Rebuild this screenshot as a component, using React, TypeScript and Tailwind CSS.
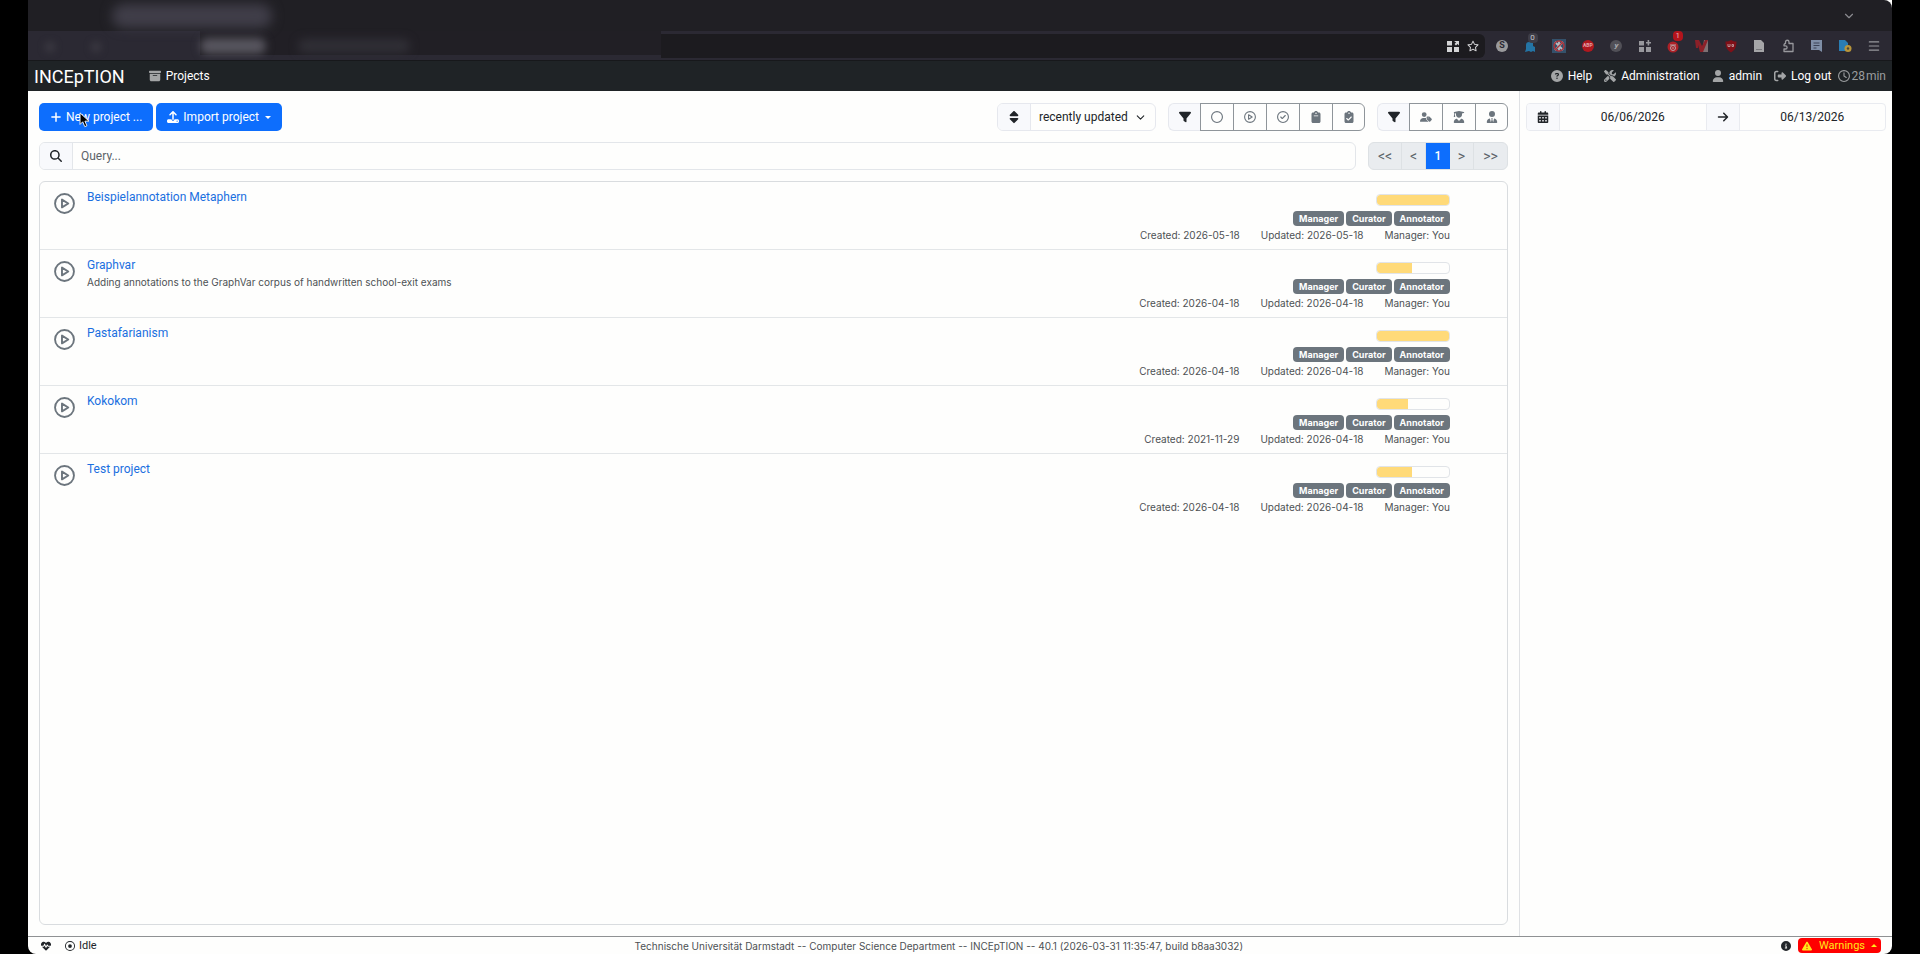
import React from "react";
import {
  FaArrowRight, FaBoxArchive, FaCalendarDays, FaCircleInfo, FaCircleQuestion, FaClipboard, FaClipboardCheck, FaFilter,
  FaHeartPulse, FaMagnifyingGlass, FaPlus, FaRegCircle, FaRegCircleCheck, FaRegCircleDot, FaRegClock,
  FaRegStar, FaRightFromBracket, FaScrewdriverWrench, FaSort, FaTriangleExclamation, FaUpload, FaUser, FaUserGraduate,
  FaUserTag, FaUserTie,
} from "react-icons/fa6";
import { ChevronDown, Menu } from "lucide-react";

type Project = { name: string; description?: string; created: string; updated: string; progress: number };

const projects: Project[] = [
  { name: "Beispielannotation Metaphern", created: "2026-05-18", updated: "2026-05-18", progress: 100 },
  { name: "Graphvar", description: "Adding annotations to the GraphVar corpus of handwritten school-exit exams", created: "2026-04-18", updated: "2026-04-18", progress: 48 },
  { name: "Pastafarianism", created: "2026-04-18", updated: "2026-04-18", progress: 100 },
  { name: "Kokokom", created: "2021-11-29", updated: "2026-04-18", progress: 43 },
  { name: "Test project", created: "2026-04-18", updated: "2026-04-18", progress: 48 },
];

const roles = ["Manager", "Curator", "Annotator"];

function PlayIcon({ className }: { className: string }) {
  return (
    <svg viewBox="0 0 20 20" className={className} fill="none" stroke="currentColor" strokeWidth="1.800" strokeLinejoin="round">
      <circle cx="10" cy="10" r="9" />
      <path d="M7.600 6.300v7.400l6-3.700z" />
    </svg>
  );
}

const stateFilters = [
  { label: "New", icon: <FaRegCircle /> },
  { label: "In progress", icon: <PlayIcon className="size-3" /> },
  { label: "Finished", icon: <FaRegCircleCheck /> },
  { label: "Curation", icon: <FaClipboard /> },
  { label: "Curation finished", icon: <FaClipboardCheck /> },
];

const roleFilters = [
  { label: "Annotator", icon: <FaUserTag /> },
  { label: "Curator", icon: <FaUserGraduate /> },
  { label: "Manager", icon: <FaUserTie /> },
];

function TilesIcon({ plus }: { plus?: boolean }) {
  return (
    <svg viewBox="0 0 12 12" className="size-3 fill-current">
      <path d="M0 1h5v4.500H0zM0 7h5v5H0zM7 7h5v5H7z" />
      <path d={plus ? "M8.600 0h1.600v2h2v1.600h-2v2H8.600v-2H7V2h1.600z" : "M7 1h5v4.500l-1.400-1.400L9 5.500 7.500 4l1.600-1.600z"} />
    </svg>
  );
}

function BlueAddonIcon() {
  return (
    <span className="relative block">
      <svg viewBox="0 0 14 14" className="size-3.5">
        <path fill="#2474a5" d="M2 6c0-2 1-3 3-3h4v4l2 1v5l-2-1-2 1-2-1-4 1 1-3z" />
      </svg>
      <span className="absolute -top-1.5 left-1 w-2.5 rounded-sm bg-[#3e3d47] text-center text-[8px] leading-[10px] text-[#c5c5ca]">0</span>
    </span>
  );
}

function BlockedIcon() {
  return (
    <svg viewBox="0 0 14 14" className="size-3.5">
      <path fill="#34516b" d="M0 0h14v14H0z" />
      <path stroke="#b9bcc2" strokeWidth="1.800" d="m3 3 8 8M11 3 3 11M7 2v10" />
      <circle cx="7" cy="7" r="5" fill="none" stroke="#a8363e" strokeWidth="1.500" />
      <path stroke="#a8363e" strokeWidth="1.500" d="m3.500 10.500 7-7" />
    </svg>
  );
}

function RoundBadge({ children, tone }: { children: string; tone: "gray" | "dim" | "red" }) {
  const tones = {
    gray: "bg-[#9a9a9c] text-[#2b2933] text-[9px]",
    dim: "bg-[#515057] text-[#a9a9ad] text-[8px] italic",
    red: "bg-[#b0181f] text-[#e0a5a8] text-[5px]",
  };
  return <span className={`flex size-3 items-center justify-center rounded-full font-bold ${tones[tone]}`}>{children}</span>;
}

function AlarmIcon() {
  return (
    <span className="relative block">
      <svg viewBox="0 0 14 14" className="size-3.5">
        <circle cx="6" cy="8" r="5.500" fill="#ad2027" />
        <circle cx="6" cy="9" r="2.500" fill="none" stroke="#b9a3a5" />
        <path stroke="#b9a3a5" d="M3 6h6M6 8v2" />
      </svg>
      <span className="absolute -top-2 left-1.5 w-2.5 rounded-sm bg-[#b3141c] text-center text-[8px] leading-[10px] text-[#e6b4b6]">1</span>
    </span>
  );
}

function BooksIcon() {
  return (
    <svg viewBox="0 0 14 14" className="size-3.5">
      <path fill="#7e7174" d="M9 1h4v12H7z" />
      <path fill="#8c2028" d="M0 1h4l3 6 3-6h3L8 13H5L3 6v3H1z" />
    </svg>
  );
}

function ShieldIcon() {
  return (
    <svg viewBox="0 0 14 14" className="size-3.5">
      <path fill="#7f1018" d="M7 1c2 1.400 3.500 1.600 5.500 1.600C12.500 8 11 11.500 7 13.500 3 11.500 1.500 8 1.500 2.600 3.500 2.600 5 2.400 7 1z" />
      <path fill="none" stroke="#b98f92" d="M4 5v2.500h2V5M8 5.500h1.500v2H8z" />
    </svg>
  );
}

function PageIcon() {
  return (
    <svg viewBox="0 0 12 14" className="h-3.5 w-3">
      <path fill="#a5a5a8" d="M1 1h7l3 3v9H1z" />
      <path stroke="#77777c" d="M3 10.500h6" />
    </svg>
  );
}

function ExtensionsIcon() {
  return (
    <svg viewBox="0 0 14 14" className="size-3.5">
      <path
        d="M4.500 4.500V3a1.700 1.700 0 0 1 3.500 0v1.500h4v8H3V10h1.500a1.600 1.600 0 0 0 0-3.200H3v-.8c0-.9.600-1.500 1.500-1.500z"
        fill="none"
        stroke="currentColor"
        strokeWidth="1.300"
        strokeLinejoin="round"
      />
    </svg>
  );
}

function NoteIcon() {
  return (
    <svg viewBox="0 0 14 14" className="size-3.5">
      <path fill="#7f8ea6" d="M1 1h11v12l-3-2H1z" />
      <path stroke="#3c4356" d="M3.500 4h6M3.500 6.500h6M3.500 9h3" />
    </svg>
  );
}

function DocumentLockIcon() {
  return (
    <svg viewBox="0 0 14 14" className="size-3.5">
      <path fill="#2a7db3" d="M1 1h6l3 3v8H1z" />
      <circle cx="10" cy="9.500" r="3.500" fill="#b8953a" />
      <circle cx="10" cy="9.500" r="1.200" fill="#4a4538" />
    </svg>
  );
}

const extensions = [
  <RoundBadge tone="gray">S</RoundBadge>,
  <BlueAddonIcon />,
  <BlockedIcon />,
  <RoundBadge tone="red">ABP</RoundBadge>,
  <RoundBadge tone="dim">y</RoundBadge>,
  <TilesIcon plus />,
  <AlarmIcon />,
  <BooksIcon />,
  <ShieldIcon />,
  <PageIcon />,
  <ExtensionsIcon />,
  <NoteIcon />,
  <DocumentLockIcon />,
  <Menu size={14} strokeWidth={2} />,
];

function BrowserChrome() {
  return (
    <header className="relative h-[60px] shrink-0 overflow-hidden rounded-tr-lg bg-[#201f24]">
      <div className="flex h-[31px] items-center justify-end pr-9 text-[#8b8b90]">
        <ChevronDown size={14} strokeWidth={2} />
      </div>
      <div className="flex h-[29px] bg-[#2b2933]">
        <div className="h-6 w-[172px]" />
        <div className="h-6 w-[461px] bg-[#211f25]" />
        <div className="flex flex-1 items-center pr-[11px]">
          <div className="mr-2.5 flex h-6 flex-1 items-center justify-end gap-2 rounded-r-md bg-[#1c1b1f] pr-1.5 text-[#d4d4d6]">
            <TilesIcon />
            <FaRegStar className="size-3" />
          </div>
          <div className="flex w-[386px] items-center justify-between text-[#98989d]">
            {extensions.map((icon, i) => (
              <span key={i} className="flex w-3.5 items-center justify-center">{icon}</span>
            ))}
          </div>
        </div>
      </div>
      <div className="absolute top-1 left-[84px] h-6 w-40 rounded-full bg-[#403e49] blur-[6px]" />
      <div className="absolute top-[38px] left-[172px] h-4 w-[66px] rounded-lg bg-[#57555e] blur-[4px]" />
      <div className="absolute top-[39px] left-[270px] h-3.5 w-28 rounded-full bg-[#302f36] blur-[5px]" />
      <div className="absolute top-[41px] left-[62px] size-3 rounded-full bg-[#37353e] blur-[3px]" />
      <div className="absolute top-[41px] left-4 size-3 rounded-full bg-[#37353e] blur-[3px]" />
    </header>
  );
}

function NavItem({ icon, children }: { icon: React.ReactNode; children: React.ReactNode }) {
  return (
    <a href="#" className="flex items-center gap-[5px] text-white">
      <span className="text-[#a3a5a6]">{icon}</span>
      {children}
    </a>
  );
}

function Addon({ children }: { children: React.ReactNode }) {
  return <span className="flex w-8 shrink-0 items-center justify-center bg-[#f8f9fc] text-[#212529]">{children}</span>;
}

function FilterGroup({ items }: { items: { label: string; icon: React.ReactNode }[] }) {
  return (
    <div className="flex h-7">
      <span className="flex w-8 items-center justify-center rounded-l-md border border-r-0 border-[#e6e8ee] bg-[#f8f9fc]"><FaFilter /></span>
      {items.map((item) => (
        <button
          key={item.label}
          type="button"
          aria-label={item.label}
          className="-mr-px flex w-[34px] items-center justify-center border border-[#8f959a] text-[#6c757d] last:mr-0 last:w-[33px] last:rounded-r-md"
        >
          {item.icon}
        </button>
      ))}
    </div>
  );
}

function ProjectRow({ project }: { project: Project }) {
  return (
    <li className="flex h-[68px] border-b border-[#e3e6e8] pr-[57px] pl-3.5 last:border-b-0">
      <PlayIcon className="mt-[11px] size-[21px] shrink-0 text-[#6c757d]" />
      <div className="ml-3 flex-1 pt-[7px]">
        <a href="#" className="block text-[12px] leading-4 text-[#1a6fe0]">{project.name}</a>
        {project.description && (
          <p className="font-[Inter,sans-serif] text-[10px] leading-[18px] text-[#4d5154]">{project.description}</p>
        )}
      </div>
      <div className="flex flex-col items-end pt-3 font-[Inter,sans-serif]">
        <div className="h-3 w-[74px] overflow-hidden rounded-[4px] border border-[#e1e4e8]">
          <div className="h-full rounded-l-[3px] bg-[#ffda79]" style={{ width: `${project.progress}%` }} />
        </div>
        <div className="mt-[5px] flex gap-0.5">
          {roles.map((role) => (
            <span key={role} className="rounded-[4px] bg-[#6c757d] px-1.5 text-[9px] leading-[15px] font-bold text-white">{role}</span>
          ))}
        </div>
        <div className="mt-0.5 flex gap-[21px] text-[10px] leading-3.5 text-[#4d5154]">
          <span>Created: {project.created}</span>
          <span>Updated: {project.updated}</span>
          <span>Manager: You</span>
        </div>
      </div>
    </li>
  );
}

const primary = "flex h-7 items-center rounded-[5px] bg-[#0d6efd] px-[11px] text-white";
const page = "flex h-full items-center justify-center border-r border-[#dde1e4] text-[14px] text-[#5c6369]";

export default function App() {
  return (
    <div className="h-screen bg-black px-7 font-[Roboto,sans-serif] text-[12px] text-[#212529]">
      <div className="flex h-full flex-col overflow-hidden rounded-b-lg bg-[#fefefd]">
        <BrowserChrome />
        <nav className="flex h-[31px] shrink-0 items-center border-t border-[#17181b] bg-[#1f2326] px-1.5">
          <a href="#" className="mr-6 text-[18px] text-white">INCEpTION</a>
          <NavItem icon={<FaBoxArchive />}>Projects</NavItem>
          <div className="ml-auto flex items-center gap-3">
            <NavItem icon={<FaCircleQuestion />}>Help</NavItem>
            <NavItem icon={<FaScrewdriverWrench />}>Administration</NavItem>
            <NavItem icon={<FaUser />}>admin</NavItem>
            <NavItem icon={<FaRightFromBracket />}>Log out</NavItem>
          </div>
          <span className="ml-[7px] flex items-center gap-px text-[#9b9d9f]"><FaRegClock /><span>28</span><span>min</span></span>
        </nav>

        <div className="flex min-h-0 flex-1">
          <main className="flex flex-1 flex-col gap-[11px] border-r border-[#dfe1e4] px-[11px] pt-3 pb-[11px]">
            <div className="flex gap-3">
              <div className="flex flex-1 gap-[3px]">
                <button type="button" className={primary}><FaPlus className="mr-1" />New project ...</button>
                <button type="button" className={primary}>
                  <FaUpload className="mr-1" />Import project
                  <span className="ml-1.5 border-x-3 border-t-3 border-x-transparent border-t-white" />
                </button>
              </div>
              <div className="flex h-7 overflow-hidden rounded-md border border-[#e6e8ee]">
                <Addon><FaSort className="size-3.5" /></Addon>
                <div className="relative flex border-l border-[#e6e8ee]">
                  <select aria-label="Sort order" className="w-[124px] appearance-none pl-2">
                    <option>recently updated</option>
                  </select>
                  <ChevronDown size={13} className="pointer-events-none absolute top-[7px] right-2" />
                </div>
              </div>
              <FilterGroup items={stateFilters} />
              <FilterGroup items={roleFilters} />
            </div>

            <div className="flex gap-3">
              <label className="flex h-7 flex-1 overflow-hidden rounded-md border border-[#e3e6ea]">
                <Addon><FaMagnifyingGlass aria-label="Search" /></Addon>
                <input type="text" placeholder="Query..." className="flex-1 border-l border-[#e3e6ea] px-2 placeholder:text-[#5c6369]" />
              </label>
              <div className="flex h-7 overflow-hidden rounded-md border border-[#dde1e4] bg-[#e9ecef]">
                <button type="button" className={`${page} w-[33px]`}>&lt;&lt;</button>
                <button type="button" className={`${page} w-6`}>&lt;</button>
                <button type="button" className="w-6 bg-[#0d6efd] font-medium text-white">1</button>
                <button type="button" className={`${page} w-6`}>&gt;</button>
                <button type="button" className="w-[33px] text-[14px] text-[#5c6369]">&gt;&gt;</button>
              </div>
            </div>

            <ul className="flex-1 rounded-md border border-[#d9dcdf]">
              {projects.map((p) => <ProjectRow key={p.name} project={p} />)}
            </ul>
          </main>

          <aside className="w-[372px] px-1.5 pt-3">
            <div className="flex h-7 overflow-hidden rounded-[4px] border border-[#e9ebf0]">
              <Addon><FaCalendarDays /></Addon>
              <input type="text" aria-label="From" defaultValue="06/06/2026" className="min-w-0 flex-1 border-x border-[#e9ebf0] text-center" />
              <Addon><FaArrowRight /></Addon>
              <input type="text" aria-label="To" defaultValue="06/13/2026" className="min-w-0 flex-1 border-l border-[#e9ebf0] text-center" />
            </div>
          </aside>
        </div>

        <footer className="flex h-[18px] shrink-0 items-center justify-between border-t border-[#8f9193] pr-[11px] pl-[13px] text-[11px] leading-4">
          <div className="flex items-center">
            <FaHeartPulse aria-label="Health" className="mr-3.5 size-2.5" />
            <FaRegCircleDot className="mr-1 size-2.5" />
            Idle
          </div>
          <span className="font-[Inter,sans-serif] text-[10px] text-[#4d5154]">
            Technische Universität Darmstadt -- Computer Science Department -- INCEpTION -- 40.1 (2026-03-31 11:35:47, build b8aa3032)
          </span>
          <div className="flex items-center gap-[7px]">
            <FaCircleInfo aria-label="Information" className="size-2.5" />
            <button type="button" className="flex h-[15px] items-center rounded-[4px] bg-[#ff0000] px-1 text-[#ffe81a]">
              <FaTriangleExclamation className="mr-[7px] size-2.5" />Warnings
              <span className="ml-1.5 border-x-3 border-b-3 border-x-transparent border-b-[#ffe81a]" />
            </button>
          </div>
        </footer>
      </div>

      <svg viewBox="0 0 12 18" className="pointer-events-none absolute top-[112px] left-[79px] h-4 w-[11px]">
        <path d="M1 1v13l3-3 2.300 5.500 2.400-1L6.500 10.300H11z" fill="#000" stroke="#fff" strokeWidth="1" />
      </svg>
    </div>
  );
}
